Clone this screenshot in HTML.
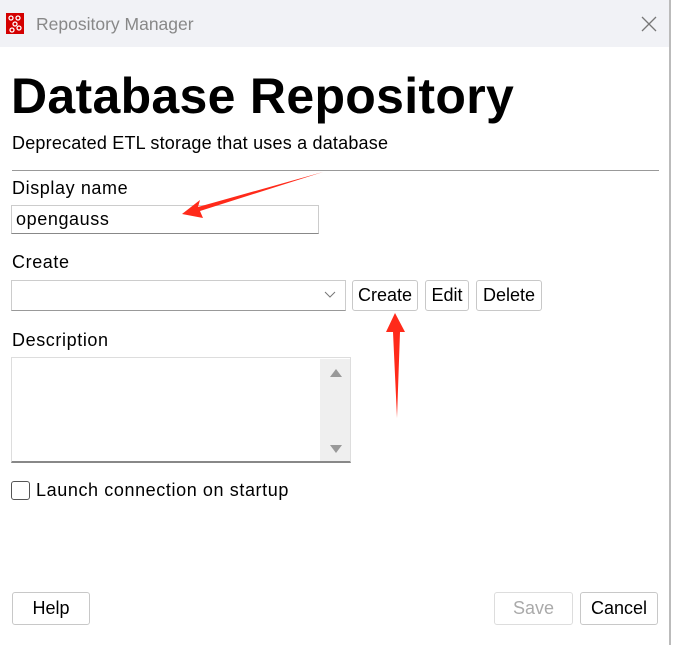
<!DOCTYPE html>
<html><head><style>
body{margin:0;width:677px;height:645px;background:#fff;font-family:"Liberation Sans",sans-serif;position:relative;overflow:hidden;color:#000}
.a{position:absolute}
.t{font-size:18px;white-space:nowrap;letter-spacing:0.6px}
.btn{position:absolute;border:1px solid #c8c8c8;border-radius:3px;background:#fff;font-size:18px;text-align:center;box-sizing:border-box}
</style></head><body>
<div class="a" style="left:0;top:0;width:669px;height:47px;background:#f1f2f6"></div>
<div class="a" style="left:669px;top:0;width:2px;height:645px;background:#bbb"></div>
<div class="a" style="left:6px;top:13px;width:18px;height:21px;background:#d40000"></div>
<svg class="a" style="left:6px;top:13px" width="18" height="21"><g fill="none" stroke="#fff" stroke-width="1.3"><circle cx="5" cy="5" r="2"/><circle cx="12" cy="5" r="2"/><circle cx="9" cy="11" r="2"/><circle cx="6" cy="17" r="2"/><circle cx="13" cy="15" r="2"/></g></svg>
<div class="a t" style="left:36px;top:14px;color:#888;font-size:17.5px;letter-spacing:0">Repository Manager</div>
<svg class="a" style="left:641px;top:16px" width="16" height="16"><path d="M1 1L15 15M15 1L1 15" stroke="#777" stroke-width="1.3"/></svg>
<div class="a" style="left:11px;top:67px;font-size:50px;font-weight:bold;white-space:nowrap;letter-spacing:0.3px">Database Repository</div>
<div class="a t" style="left:12px;top:133px;letter-spacing:0.2px">Deprecated ETL storage that uses a database</div>
<div class="a" style="left:12px;top:170px;width:647px;height:1px;background:#999"></div>
<div class="a t" style="left:12px;top:178px">Display name</div>
<div class="a" style="left:11px;top:205px;width:308px;height:29px;border:1px solid #ccc;border-bottom-color:#888;box-sizing:border-box"></div>
<div class="a t" style="left:16px;top:209px">opengauss</div>
<div class="a t" style="left:12px;top:252px">Create</div>
<div class="a" style="left:11px;top:280px;width:335px;height:31px;border:1px solid #ccc;border-bottom-color:#999;box-sizing:border-box"></div>
<svg class="a" style="left:324px;top:291px" width="12" height="8"><path d="M1 1L6 6L11 1" fill="none" stroke="#777" stroke-width="1"/></svg>
<div class="btn" style="left:352px;top:280px;width:66px;height:31px;line-height:29px">Create</div>
<div class="btn" style="left:425px;top:280px;width:44px;height:31px;line-height:29px">Edit</div>
<div class="btn" style="left:476px;top:280px;width:66px;height:31px;line-height:29px">Delete</div>
<div class="a t" style="left:12px;top:330px">Description</div>
<div class="a" style="left:11px;top:357px;width:340px;height:106px;border:1px solid #ddd;border-bottom:2px solid #888;box-sizing:border-box"></div>
<div class="a" style="left:320px;top:359px;width:30px;height:102px;background:#efefef"></div>
<svg class="a" style="left:329px;top:368px" width="14" height="90"><path d="M1 9L7 1L13 9Z M1 77L7 85L13 77Z" fill="#999"/></svg>
<div class="a" style="left:11px;top:481px;width:19px;height:19px;border:1.5px solid #555;border-radius:3px;box-sizing:border-box"></div>
<div class="a t" style="left:36px;top:480px">Launch connection on startup</div>
<div class="btn" style="left:12px;top:592px;width:78px;height:33px;line-height:31px">Help</div>
<div class="btn" style="left:494px;top:592px;width:79px;height:33px;line-height:31px;color:#aaa;border-color:#ddd">Save</div>
<div class="btn" style="left:580px;top:592px;width:78px;height:33px;line-height:31px">Cancel</div>
<svg class="a" style="left:0;top:0" width="677" height="645"><g fill="#ff2a1a"><path d="M323 172L198 207L200 200L182 214L203 218L200 211Z"/><path d="M395 313L386 332L393 332L397 418L400 332L405 332Z"/></g></svg>
</body></html>
